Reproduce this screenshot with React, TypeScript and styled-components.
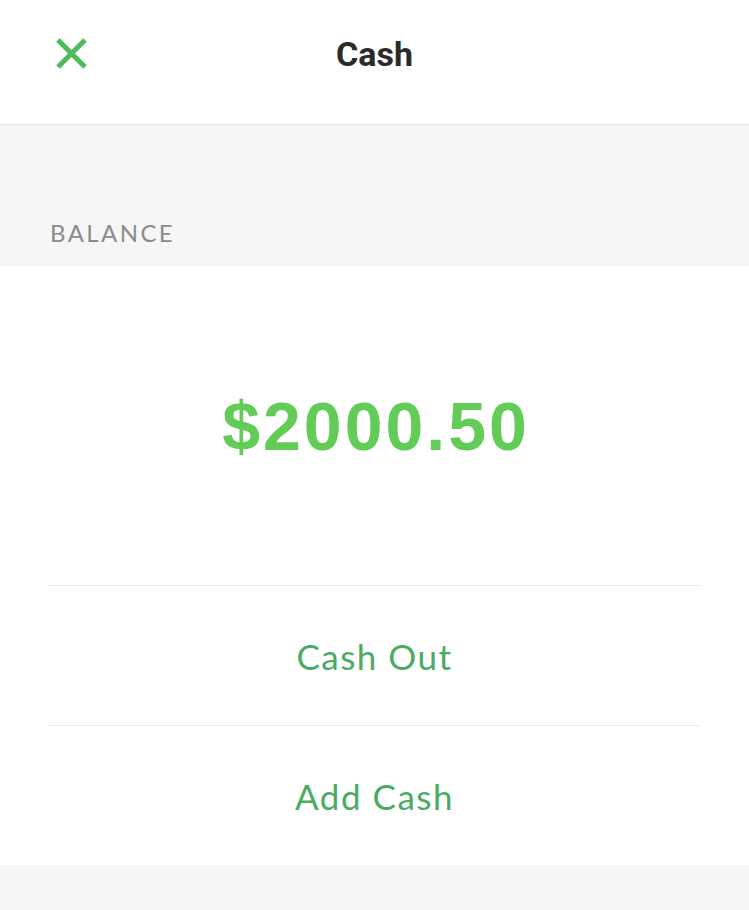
import React from "react";
import styled, { createGlobalStyle } from "styled-components";

const Global = createGlobalStyle`
  html, body { margin: 0; padding: 0; background: #f6f6f6; }
  body { font-family: "Lato", "Liberation Sans", sans-serif; }
`;

const Screen = styled.div`
  width: 749px;
  min-height: 910px;
  background: #f6f6f6;
  display: flex;
  flex-direction: column;
`;

const Header = styled.header`
  height: 124px;
  background: #ffffff;
  border-bottom: 1px solid #e2e2e2;
  display: grid;
  grid-template-columns: 1fr auto 1fr;
  align-items: center;
  padding: 0 55px;
  box-sizing: content-box;
`;

const CloseButton = styled.button`
  justify-self: start;
  width: 33px;
  height: 33px;
  padding: 0;
  margin-top: -18px;
  border: 0;
  background: transparent;
  display: flex;
`;

const Title = styled.h1`
  margin: -17px 0 0;
  font-family: "Roboto", "Liberation Sans", sans-serif;
  font-weight: 700;
  font-size: 34px;
  color: #2a2a2a;
`;

const SectionLabelBand = styled.div`
  height: 141px;
  display: flex;
  align-items: flex-end;
  padding: 0 50px 21px;
  box-sizing: border-box;
`;

const SectionLabel = styled.span`
  font-family: "Lato", sans-serif;
  font-size: 24px;
  letter-spacing: 2.4px;
  color: #8b8b8b;
  line-height: 1;
`;

const Card = styled.section`
  background: #ffffff;
  display: flex;
  flex-direction: column;
  padding: 0 48px;
`;

const AmountArea = styled.div`
  height: 319px;
  display: flex;
  align-items: center;
  justify-content: center;
`;

const Amount = styled.div`
  font-family: "Liberation Sans", Arial, sans-serif;
  font-weight: 700;
  font-size: 68px;
  letter-spacing: 3px;
  color: #63cc57;
  margin-left: 3px;
`;

const ActionRow = styled.button`
  height: 140px;
  border: 0;
  border-top: 1px solid #ececec;
  background: transparent;
  display: flex;
  align-items: center;
  justify-content: center;
  font-family: "Lato", sans-serif;
  font-size: 35px;
  letter-spacing: 1.5px;
  color: #4aab62;
  padding: 0;
  cursor: pointer;
`;

const Footer = styled.div`
  flex: 1;
  min-height: 45px;
`;

export default function App() {
  return (
    <Screen>
      <Global />
      <Header>
        <CloseButton aria-label="Close">
          <svg width="33" height="33" viewBox="0 0 33 33">
            <path
              d="M3 3 L30 30 M30 3 L3 30"
              stroke="#4cbb5c"
              strokeWidth="5"
              strokeLinecap="butt"
            />
          </svg>
        </CloseButton>
        <Title>Cash</Title>
        <span />
      </Header>
      <SectionLabelBand>
        <SectionLabel>BALANCE</SectionLabel>
      </SectionLabelBand>
      <Card>
        <AmountArea>
          <Amount>$2000.50</Amount>
        </AmountArea>
        <ActionRow>Cash Out</ActionRow>
        <ActionRow>Add Cash</ActionRow>
      </Card>
      <Footer />
    </Screen>
  );
}
